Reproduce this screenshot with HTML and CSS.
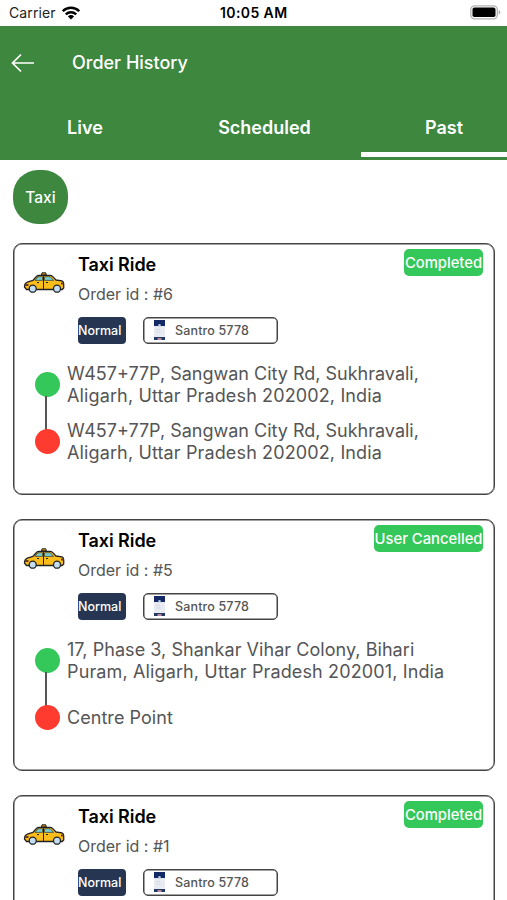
FILE: index.html
```html
<!DOCTYPE html>
<html lang="en">
<head>
<meta charset="utf-8">
<title>Order History</title>
<link rel="stylesheet" href="styles.css">
</head>
<body>
<svg class="defs" aria-hidden="true">
  <symbol id="taxi" viewBox="0 0 42 22">
    <path d="M18.500 3 19 .8h3.800l.5 2.200z" fill="#d99a16" stroke="#222" stroke-width="1"/>
    <path d="M1.500 15c-.2-2.500 1-4.300 3.500-5.200l5-1.500L13.500 4.500c.7-.8 1.500-1.100 2.500-1.100h11c1.200 0 2 .4 2.800 1.200L33 8l6 .8c1 .3 1.700 1.500 1.700 3.300v3.900l-1.500 1.500H3.500z" fill="#fbbd1c" stroke="#222" stroke-width="1.300" stroke-linejoin="round"/>
    <path d="M12 8.400 15 4.700h4.500v3.700zM21.500 4.700h5.700l3.300 3.700h-9z" fill="#76cbd0" stroke="#222" stroke-width=".6"/>
    <path d="M20.500 4v13.500M14 10.500h2M23 10.500h2" fill="none" stroke="#222" stroke-width="1"/>
    <path d="M2 13h3.500M38 11.500h2.500" stroke="#6d3b18" stroke-width="2"/>
    <g fill="#c3def2" stroke="#222" stroke-width="1.300"><circle cx="9.700" cy="16.700" r="3.500"/><circle cx="34" cy="16.700" r="3.500"/></g>
  </symbol>
  <symbol id="thumb" viewBox="0 0 11 20">
    <path d="M0 0h11v20H0z" fill="#e8ebf2"/>
    <path d="M0 0h11v6H0z" fill="#142a66"/>
    <path d="M4 6.500 4.600 4h1.800L7 6.500z" fill="#b9c5df"/>
    <path d="M2 9.500h4M2 12h5" stroke="#cfd4de" stroke-width=".8"/>
    <path d="M0 17h11v3H0z" fill="#263763"/>
    <path d="M3.500 18h4v2h-4z" fill="#b98a9f"/>
  </symbol>
</svg>
<div class="status-bar">
  <span class="carrier">Carrier</span>
  <svg class="wifi" viewBox="0 0 18 14"><g fill="none" stroke="#000" stroke-width="2.400"><path d="M.8 5.200a11.600 11.600 0 0 1 16.400 0"/><path d="M3.800 8.400a7.400 7.400 0 0 1 10.400 0"/></g><path d="M9 13.500 5.900 10.400a4.400 4.400 0 0 1 6.200 0z"/></svg>
  <span class="clock">10:05 AM</span>
  <svg class="battery" viewBox="0 0 31 15"><rect x=".8" y=".8" width="26.500" height="13" rx="3.800" fill="#fff" stroke="#b2b2b2" stroke-width="1.300"/><rect x="2.500" y="2.600" width="23" height="9.500" rx="1.800"/><path d="M28.700 5v4.600c2-.6 2-4 0-4.600z" fill="#aaa"/></svg>
</div>
<header class="header">
  <div class="title-row">
    <svg class="back" viewBox="0 0 24 20"><path d="M23 10H1.500M10 1.500 1.500 10l8.500 8.500" fill="none" stroke="#fff" stroke-width="1.700"/></svg>
    <h1>Order History</h1>
  </div>
  <nav class="tabs">
    <span class="tab live">Live</span>
    <span class="tab scheduled">Scheduled</span>
    <span class="tab past">Past</span>
  </nav>
</header>
<main>
  <button class="filter">Taxi</button>
  <article class="card">
    <div class="summary">
      <svg class="taxi"><use href="#taxi"/></svg>
      <div class="details">
        <h2>Taxi Ride</h2>
        <p class="order">Order id : #6</p>
        <div class="tags"><span class="kind">Normal</span><span class="car"><svg class="thumb"><use href="#thumb"/></svg><span>Santro 5778</span></span></div>
      </div>
      <span class="state completed">Completed</span>
    </div>
    <div class="route">
      <div class="stop pickup"><i class="dot"></i><p>W457+77P, Sangwan City Rd, Sukhravali,<br><span class="region">Aligarh, Uttar Pradesh 202002, India</span></p></div>
      <div class="stop drop"><i class="dot"></i><p>W457+77P, Sangwan City Rd, Sukhravali,<br><span class="region">Aligarh, Uttar Pradesh 202002, India</span></p></div>
    </div>
  </article>
  <article class="card">
    <div class="summary">
      <svg class="taxi"><use href="#taxi"/></svg>
      <div class="details">
        <h2>Taxi Ride</h2>
        <p class="order">Order id : #5</p>
        <div class="tags"><span class="kind">Normal</span><span class="car"><svg class="thumb"><use href="#thumb"/></svg><span>Santro 5778</span></span></div>
      </div>
      <span class="state cancelled">User Cancelled</span>
    </div>
    <div class="route">
      <div class="stop pickup"><i class="dot"></i><p><span class="street">17, Phase 3, Shankar Vihar Colony, Bihari</span><br><span class="region">Puram, Aligarh, Uttar Pradesh 202001, India</span></p></div>
      <div class="stop drop"><i class="dot"></i><p><span class="street">Centre Point</span></p></div>
    </div>
  </article>
  <article class="card">
    <div class="summary">
      <svg class="taxi"><use href="#taxi"/></svg>
      <div class="details">
        <h2>Taxi Ride</h2>
        <p class="order">Order id : #1</p>
        <div class="tags"><span class="kind">Normal</span><span class="car"><svg class="thumb"><use href="#thumb"/></svg><span>Santro 5778</span></span></div>
      </div>
      <span class="state completed">Completed</span>
    </div>
  </article>
</main>
</body>
</html>
```
FILE: styles.css
```css
* { box-sizing: border-box; }
body { margin: 0; height: 900px; overflow: hidden; background: #fff; font-family: Inter, "Liberation Sans", sans-serif; color: #000; white-space: nowrap; }
h1, h2, p { margin: 0; }
.defs { display: none; }
.status-bar { height: 25.5px; display: grid; grid-template-columns: 53px 158px 1fr 37px; align-items: center; padding-left: 9px; }
.carrier { font-size: 14px; letter-spacing: .1px; color: #222; }
.wifi { width: 18px; height: 14px; }
.clock { font-size: 14px; font-weight: 600; letter-spacing: .4px; }
.battery { width: 31px; height: 15px; }
.header { height: 134px; background: #3d873f; color: #fff; display: flex; flex-direction: column; }
.title-row { height: 74px; display: flex; align-items: center; padding-left: 11px; gap: 37px; }
.back { width: 24px; height: 20px; }
h1 { font-size: 18px; font-weight: 500; line-height: 24px; }
.tabs { height: 60px; display: grid; grid-template-columns: 168px 193px 1fr; font-size: 18px; font-weight: 600; text-align: center; }
.tab { height: 57.5px; line-height: 56px; }
.live { padding-left: 2px; }
.past { border-bottom: 5px solid #fff; padding-left: 20px; }
main { height: 740.5px; overflow: hidden; padding: 10.5px 12px 0 13px; }
.filter { display: block; width: 55px; height: 54px; padding: 1px 0 0; margin: 0 0 18.5px; border: 0; border-radius: 25px; background: #3d873f; color: #fff; font: 500 15.5px/54px Inter, sans-serif; }
.card { height: 252px; margin-bottom: 24px; border: 1px solid #444; border-radius: 9px; box-shadow: inset 0 0 0 .5px #444; }
.summary { height: 119px; display: grid; grid-template-columns: 64px 1fr auto; padding-right: 11px; }
.taxi { width: 42px; height: 22px; margin: 28px 0 0 9px; }
h2 { font-size: 18px; font-weight: 600; line-height: 24px; margin-top: 9.5px; letter-spacing: -.06px; }
.order { font-size: 16px; line-height: 22px; color: #555; margin-top: 6px; }
.tags { display: flex; gap: 17px; margin-top: 11.5px; }
.kind { width: 48px; height: 27px; border-radius: 4px; background: #253552; color: #fff; font-size: 12.5px; font-weight: 500; line-height: 27px; }
.car { width: 135px; height: 27px; border: 1px solid #444; box-shadow: inset 0 0 0 .5px #444; border-radius: 5px; display: flex; align-items: center; gap: 10.5px; padding-left: 9.5px; color: #555; font-size: 12.5px; font-weight: 500; letter-spacing: .15px; }
.thumb { width: 11px; height: 20px; }
.state { height: 27px; margin-top: 5.5px; border-radius: 5px; background: #34c759; color: #fff; font-size: 14.8px; font-weight: 500; line-height: 28px; text-align: center; }
.completed { width: 79px; }
.cancelled { width: 109px; }
.route { display: grid; gap: 13.5px; padding-left: 21px; }
.stop { display: grid; grid-template-columns: 25px 1fr; gap: 7px; height: 44px; align-items: center; color: #555; font-size: 18px; line-height: 22px; position: relative; }
.street { letter-spacing: .05px; }
.region { letter-spacing: .13px; }
.dot { width: 25px; height: 25px; margin-bottom: 1px; border-radius: 50%; }
.pickup .dot { background: #34c759; }
.drop .dot { background: #ff3b30; }
.pickup::after { content: ""; position: absolute; left: 10px; top: 33px; width: 2px; height: 34px; background: #555; }
```
